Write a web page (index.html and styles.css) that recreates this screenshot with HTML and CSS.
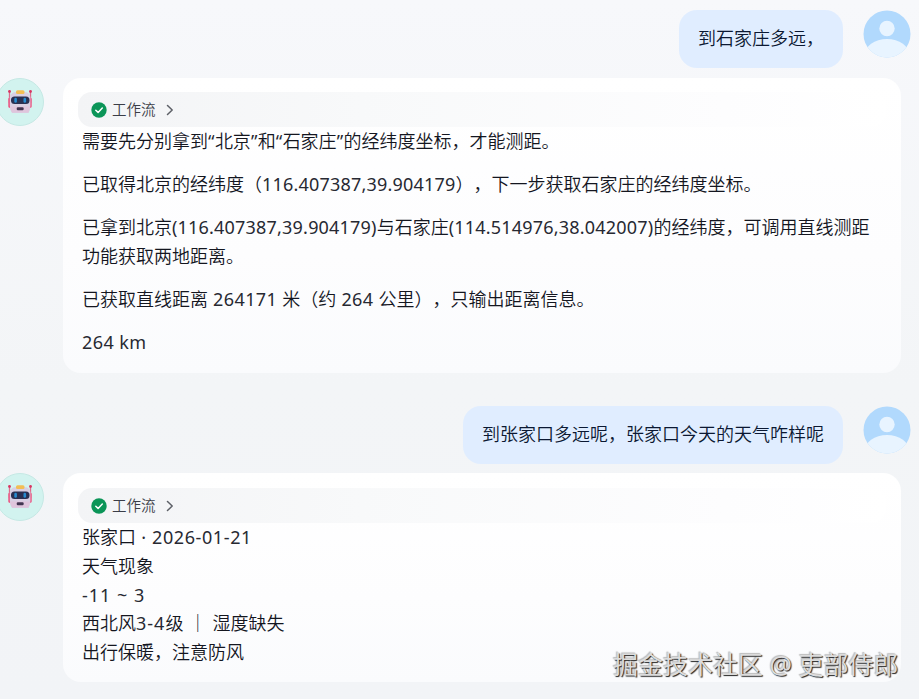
FILE: index.html
```html
<!DOCTYPE html>
<html lang="zh-CN">
<head>
<meta charset="utf-8">
<title>对话</title>
<link rel="stylesheet" href="styles.css">
</head>
<body>
<svg class="defs" aria-hidden="true">
  <defs>
    <symbol id="robot" viewBox="0 0 48 48">
      <circle cx="24" cy="24" r="23.5" fill="#d2f3ef" stroke="#c5e8e4"/>
      <path d="M13.500 13v12M34.500 13v12" stroke="#dd6c8c" stroke-width="1.300"/>
      <path d="M13.700 21v7.500M34.300 21v7.500" stroke="#f0386c" stroke-width="2.600" stroke-linecap="round"/>
      <circle cx="13.500" cy="13.500" r="1.400" fill="#d93662"/><circle cx="34.500" cy="13.500" r="1.400" fill="#d93662"/>
      <path d="M18 14.300h12.500q3.300 1 4 5.700v8q-.5 4.500-2 6.800H16Q14 32 13.700 28v-8q.8-4.700 4.300-5.700z" fill="#d9cfe3"/>
      <path d="M14 28.500h20q-.5 4-1.500 6.300H16Q14.500 32 14 28.500z" fill="#dfc5dc"/>
      <rect x="20" y="12.300" width="8.500" height="3.600" rx="1.500" fill="#f2be55"/>
      <rect x="15" y="18.500" width="18.500" height="7.500" rx="3.500" fill="#293052"/>
      <rect x="18.300" y="19.700" width="2.600" height="5" rx="1.300" fill="#268bd0"/><rect x="27.500" y="19.700" width="2.600" height="5" rx="1.300" fill="#268bd0"/>
      <rect x="20.700" y="29.200" width="7" height="3" rx="1.200" fill="#423551"/>
    </symbol>
    <clipPath id="round"><circle cx="24" cy="24" r="23.500"/></clipPath>
    <symbol id="person" viewBox="0 0 48 48">
      <g clip-path="url(#round)">
        <rect width="48" height="48" fill="#b1d9fd"/>
        <circle cx="24" cy="18.500" r="7.700" fill="#e8f4ff"/>
        <ellipse cx="24" cy="45.500" rx="22.500" ry="16.500" fill="#e8f4ff"/>
      </g>
    </symbol>
    <symbol id="check" viewBox="0 0 16 16">
      <circle cx="8" cy="8" r="7.700" fill="#0b9558"/>
      <path d="M4.800 8.200l2.300 2.200 4.200-4.300" fill="none" stroke="#fff" stroke-width="1.500" stroke-linecap="round" stroke-linejoin="round"/>
    </symbol>
    <symbol id="chevron" viewBox="0 0 8 12">
      <path d="M1.500 1.500L6.200 6l-4.700 4.500" fill="none" stroke="#5d6067" stroke-width="1.500" stroke-linecap="round" stroke-linejoin="round"/>
    </symbol>
  </defs>
</svg>
<main class="chat">
  <div class="row user">
    <div class="bubble">到石家庄多远，</div>
    <svg class="avatar"><use href="#person"/></svg>
  </div>
  <div class="row bot">
    <svg class="avatar"><use href="#robot"/></svg>
    <article class="card">
      <div class="chip"><svg class="check"><use href="#check"/></svg><span>工作流</span><svg class="chevron"><use href="#chevron"/></svg></div>
      <div class="text spaced">
        <p>需要先分别拿到<span class="w2">“</span>北京<span class="w2">”</span>和<span class="w2">“</span>石家庄<span class="w2">”</span>的经纬度坐标，才能测距。</p>
        <p>已取得北京的经纬度（<span class="w1">116.407387,39.904179</span>），下一步获取石家庄的经纬度坐标。</p>
        <p>已拿到北京<span class="w1">(116.407387,39.904179)</span>与石家庄<span class="w1">(114.514976,38.042007)</span>的经纬度，可调用直线测距<br>功能获取两地距离。</p>
        <p>已获取直线距离<span class="w2"> 264171 </span>米（约<span class="w2"> 264 </span>公里），只输出距离信息。</p>
        <p class="w2">264 km</p>
      </div>
    </article>
  </div>
  <div class="row user second">
    <div class="bubble">到张家口多远呢，张家口今天的天气咋样呢</div>
    <svg class="avatar"><use href="#person"/></svg>
  </div>
  <div class="row bot">
    <svg class="avatar"><use href="#robot"/></svg>
    <article class="card weather">
      <div class="chip"><svg class="check"><use href="#check"/></svg><span>工作流</span><svg class="chevron"><use href="#chevron"/></svg></div>
      <div class="text">
        <p>张家口<span class="w3"> · 2026-01-21</span></p>
        <p>天气现象</p>
        <p class="w4">-11 ~ 3</p>
        <p>西北风<span class="w4">3-4</span>级<span class="w3"> ｜ </span>湿度缺失</p>
        <p>出行保暖，注意防风</p>
      </div>
    </article>
  </div>
</main>
<div class="watermark">掘金技术社区 @ 吏部侍郎</div>
</body>
</html>
```
FILE: styles.css
```css
* { box-sizing: border-box; }
body {
  margin: 0;
  height: 699px;
  overflow: hidden;
  position: relative;
  background: linear-gradient(#f7f8fb, #f3f5f7 55%, #f2f4f7);
  color: #14161f;
  font: 350 18px/29px "Noto Sans", "Noto Sans CJK SC", sans-serif;
  text-spacing-trim: space-all;
}
p { margin: 0; }
.defs { position: absolute; width: 0; height: 0; }
.chat { display: flex; flex-direction: column; padding-top: 10px; }
.row { display: flex; align-items: flex-start; }
.avatar { width: 48px; height: 48px; flex: none; }
.user { justify-content: flex-end; gap: 20px; height: 58px; padding-right: 8px; margin-bottom: 10px; }
.second { margin-top: 33px; margin-bottom: 9px; }
.bubble {
  height: 58px;
  padding: 14px 19px;
  border-radius: 18px;
  background: #e0edff;
  color: #0b1832;
  white-space: nowrap;
}
.bot { gap: 19px; margin-left: -4px; }
.card {
  width: 838px;
  height: 295px;
  padding: 14px 15px;
  border-radius: 18px;
  background: linear-gradient(#fff, #fdfdfe 60%, #fafbfd);
}
.weather { height: 209px; padding-top: 15px; }
.weather .text { line-height: 28.8px; }
.chip {
  display: flex;
  align-items: center;
  height: 35px;
  padding-left: 13px;
  border-radius: 14px;
  background: linear-gradient(90deg, #f3f4f6, #f8f9fa 35%, #fdfdfe 80%, #fff);
  color: #3a3d47;
  font-size: 14.500px;
}
.check { width: 16px; height: 16px; margin-right: 5px; }
.chevron { width: 8px; height: 12px; margin-left: 10px; }
.text { padding-left: 4px; white-space: nowrap; }
.spaced { display: flex; flex-direction: column; gap: 14px; }
.w1, .w2, .w3, .w4 { font-weight: 400; color: #272932; }
.w1 { letter-spacing: 0.2px; }
.w2 { letter-spacing: 0.4px; }
.w3 { letter-spacing: 0.6px; }
.w4 { letter-spacing: 1px; }
.watermark {
  position: absolute;
  left: 613px;
  top: 646px;
  color: #dcdcdc;
  font-size: 25px;
  font-weight: 400;
  line-height: 36px;
  white-space: nowrap;
  text-shadow: 1px 1px 1px #222, -1px -1px 1px #bbb;
}
```
